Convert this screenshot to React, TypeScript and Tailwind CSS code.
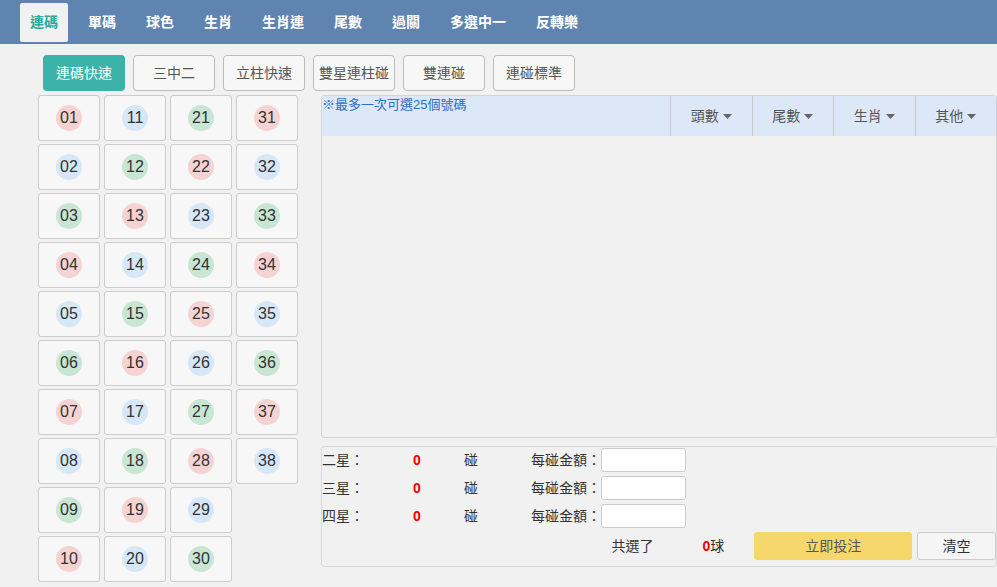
import React from 'react';

const TABS = ['連碼', '單碼', '球色', '生肖', '生肖連', '尾數', '過關', '多選中一', '反轉樂'];
const MODES = ['連碼快速', '三中二', '立柱快速', '雙星連柱碰', '雙連碰', '連碰標準'];
const FILTERS = ['頭數', '尾數', '生肖', '其他'];
const STARS = ['二星：', '三星：', '四星：'];

// ball colour follows n % 3: 1 red, 2 blue, 0 green
function ballClass(n: number) {
  if (n % 3 === 1) return 'bg-[#f6d3d3]';
  if (n % 3 === 2) return 'bg-[#d6e7f7]';
  return 'bg-[#c9e6d4]';
}

function Caret() {
  return (
    <svg width="9" height="5" viewBox="0 0 9 5" className="ml-[4px]">
      <path d="M0 0h9L4.5 5z" fill="#666" />
    </svg>
  );
}

export default function App() {
  const numbers = Array.from({ length: 38 }, (_, i) => i + 1);

  return (
    <div
      className="h-[587px] w-[997px] overflow-hidden bg-[#f1f1f1] text-[14px] text-[#333]"
      style={{ fontFamily: '"Liberation Sans", "Noto Sans CJK TC", sans-serif' }}
    >
      {/* Top tabs */}
      <nav className="flex h-[44px] gap-[10px] bg-[#5f84b0] pb-[2px] pl-[20px] pt-[3px]">
        {TABS.map((tab, i) => (
          <div
            key={tab}
            className={
              i === 0
                ? 'flex items-center rounded-[2px] bg-[#f1f1f1] px-[10px] font-bold text-[#2fa99d]'
                : 'flex items-center px-[10px] font-bold text-white'
            }
          >
            {tab}
          </div>
        ))}
      </nav>

      {/* Mode buttons */}
      <div className="flex gap-[8px] pl-[43px] pt-[11px]">
        {MODES.map((mode, i) => (
          <button
            key={mode}
            className={
              i === 0
                ? 'flex h-[36px] w-[82px] items-center justify-center rounded-[4px] bg-[#3cb3a9] text-white'
                : 'flex h-[36px] w-[82px] items-center justify-center rounded-[4px] border border-[#bbb] bg-[#f7f7f7] text-[#555]'
            }
          >
            {mode}
          </button>
        ))}
      </div>

      <div className="mt-[4px] flex pl-[38px]">
        {/* Number grid */}
        <div className="grid w-[260px] grid-flow-col grid-rows-10 gap-x-[4px] gap-y-[3px]">
          {numbers.map((n) => (
            <div
              key={n}
              className="flex h-[46px] items-center justify-center rounded-[3px] border border-[#ccc] bg-[#f7f7f7]"
            >
              <span
                className={`flex h-[26px] w-[26px] items-center justify-center rounded-full text-[16px] text-[#333] ${ballClass(n)}`}
              >
                {String(n).padStart(2, '0')}
              </span>
            </div>
          ))}
        </div>

        {/* Right side */}
        <div className="ml-[23px] w-[676px]">
          <div className="h-[343px] rounded-[3px] border border-[#d4d4d4]">
            <div className="flex h-[40px] bg-[#dce8f8]">
              <div className="flex-1 pt-[1px] text-[13px] leading-[16px] text-[#2b6fc2]">
                ※最多一次可選25個號碼
              </div>
              {FILTERS.map((f) => (
                <div
                  key={f}
                  className="flex w-[81.5px] items-center justify-center border-l border-[#c8c8c8] text-[#555]"
                >
                  {f}
                  <Caret />
                </div>
              ))}
            </div>
          </div>

          <div className="mt-[8px] h-[121px] rounded-[3px] border border-[#d8d8d8] pt-[1px]">
            <div className="flex flex-col gap-[4px]">
              {STARS.map((s) => (
                <div key={s} className="flex h-[24px] items-center">
                  <span className="w-[91px]">{s}</span>
                  <span className="w-[51px] font-bold text-[#e00]">0</span>
                  <span className="w-[67px]">碰</span>
                  <span className="w-[70px]">每碰金額：</span>
                  <input className="h-[24px] w-[85px] rounded-[3px] border border-[#ccc] bg-white" />
                </div>
              ))}
            </div>
            <div className="mt-[4px] flex h-[28px] items-center">
              <span className="w-[290px]" />
              <span className="w-[91px]">共選了</span>
              <span className="w-[52px]">
                <b className="text-[#e00]">0</b>球
              </span>
              <button className="h-[28px] w-[158px] rounded-[3px] bg-[#f6d76b] text-[#555]">
                立即投注
              </button>
              <button className="ml-[5px] h-[28px] w-[79px] rounded-[3px] border border-[#ccc] bg-[#f5f5f5]">
                清空
              </button>
            </div>
          </div>
        </div>
      </div>
    </div>
  );
}
